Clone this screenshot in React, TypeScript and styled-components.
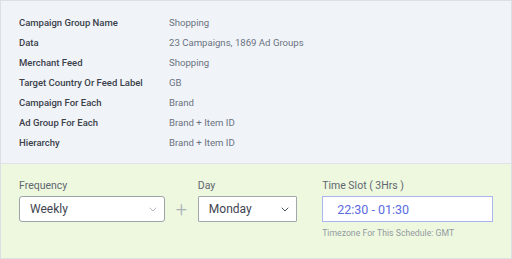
import React from 'react';
import styled, { createGlobalStyle } from 'styled-components';

const GlobalStyle = createGlobalStyle`
  html, body {
    margin: 0;
    padding: 0;
    background: #ffffff;
  }
  body {
    font-family: Roboto, 'Liberation Sans', sans-serif;
  }
`;

const details = [
  { label: 'Campaign Group Name', value: 'Shopping' },
  { label: 'Data', value: '23 Campaigns, 1869 Ad Groups' },
  { label: 'Merchant Feed', value: 'Shopping' },
  { label: 'Target Country Or Feed Label', value: 'GB' },
  { label: 'Campaign For Each', value: 'Brand' },
  { label: 'Ad Group For Each', value: 'Brand + Item ID' },
  { label: 'Hierarchy', value: 'Brand + Item ID' },
];

const Chevron = ({ dark }: { dark?: boolean }) => (
  <svg width="8" height="5" viewBox="0 0 8 5" fill="none">
    <path
      d="M1 1l3 3 3-3"
      stroke={dark ? '#4b5563' : '#b4bac3'}
      strokeWidth="1"
      strokeLinecap="round"
      strokeLinejoin="round"
    />
  </svg>
);

const App = () => {
  return (
    <>
      <GlobalStyle />
      <Card>
        <Summary>
          {details.map((d) => (
            <Row key={d.label}>
              <Label>{d.label}</Label>
              <Value>{d.value}</Value>
            </Row>
          ))}
        </Summary>
        <Schedule>
          <Field width={147}>
            <FieldLabel>Frequency</FieldLabel>
            <Select rounded>
              <span>Weekly</span>
              <Chevron />
            </Select>
          </Field>
          <Plus>+</Plus>
          <Field width={100}>
            <FieldLabel>Day</FieldLabel>
            <Select>
              <span>Monday</span>
              <Chevron dark />
            </Select>
          </Field>
          <Field width={172} gap={25}>
            <FieldLabel>Time Slot ( 3Hrs )</FieldLabel>
            <TimeBox>22:30 - 01:30</TimeBox>
            <Hint>Timezone For This Schedule: GMT</Hint>
          </Field>
        </Schedule>
      </Card>
    </>
  );
};

const Card = styled.div`
  width: 512px;
  height: 259px;
  box-sizing: border-box;
  border: 1px solid #dcdfe4;
  display: flex;
  flex-direction: column;
`;

const Summary = styled.div`
  background: #f0f4f9;
  padding: 12px 18px 11px;
  display: flex;
  flex-direction: column;
  border-bottom: 1px solid #dfe3e8;
`;

const Row = styled.div`
  display: flex;
  align-items: center;
  height: 19.9px;
`;

const Label = styled.div`
  width: 150px;
  color: #3b4049;
  font-weight: 500;
  font-size: 9.5px;
`;

const Value = styled.div`
  color: #6b7280;
  font-size: 9.6px;
`;

const Schedule = styled.div`
  flex: 1;
  background: #edf8de;
  display: flex;
  align-items: flex-start;
  padding: 15px 18px 0;
`;

const Field = styled.div<{ width: number; gap?: number }>`
  width: ${(p) => p.width}px;
  display: flex;
  flex-direction: column;
  margin-left: ${(p) => (p.gap ? `${p.gap}px` : '0')};
`;

const FieldLabel = styled.div`
  font-size: 10.5px;
  color: #5f6670;
  height: 17px;
  line-height: 14px;
`;

const Select = styled.div<{ rounded?: boolean }>`
  height: 26px;
  box-sizing: border-box;
  border: 1px solid ${(p) => (p.rounded ? '#9ca3ab' : '#a3a8ae')};
  border-radius: ${(p) => (p.rounded ? '3px' : '1px')};
  background: #ffffff;
  display: flex;
  align-items: center;
  justify-content: space-between;
  padding: 0 7px 0 10px;
  font-size: 12px;
  color: #3f4550;
`;

const Plus = styled.div`
  width: 33px;
  height: 26px;
  margin-top: 17px;
  display: flex;
  align-items: center;
  justify-content: center;
  color: #aab1b8;
  font-size: 20px;
  font-weight: 300;
`;

const TimeBox = styled.div`
  height: 26px;
  box-sizing: border-box;
  border: 1px solid #aab4ee;
  background: #ffffff;
  display: flex;
  align-items: center;
  padding-left: 14px;
  font-size: 12.5px;
  color: #5b6be0;
`;

const Hint = styled.div`
  margin-top: 6px;
  font-size: 8.7px;
  color: #939aa2;
`;

export default App;
